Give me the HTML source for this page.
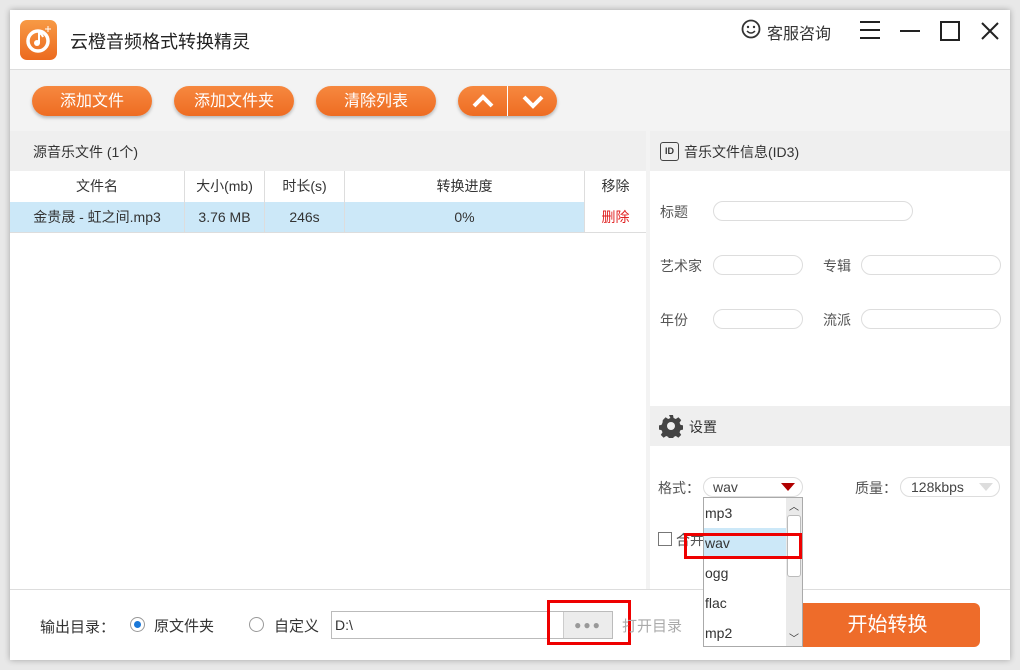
<!DOCTYPE html>
<html><head><meta charset="utf-8"><style>
*{margin:0;padding:0;box-sizing:border-box}
body{width:1020px;height:670px;background:#e8e8e8;font-family:"Liberation Sans","Noto Sans CJK SC",sans-serif;position:relative;overflow:hidden;color:#333}
.a{position:absolute}
.win{left:10px;top:10px;width:1000px;height:650px;background:#f3f3f3;box-shadow:0 0 6px rgba(0,0,0,.3)}
.btn{height:30px;top:86px;border-radius:15px;background:linear-gradient(#f6883f,#ee6c22);color:#fff;font-size:16px;text-align:center;line-height:32px;box-shadow:0 2px 3px rgba(0,0,0,.25)}
.th{top:171px;height:31px;line-height:31px;font-size:14px;text-align:center;border-right:1px solid #ddd}
.td{top:202px;height:30px;line-height:30px;font-size:14px;text-align:center;border-right:1px solid #ddd}
.lbl{font-size:14px;color:#555}
.inp{height:20px;border:1px solid #ddd;border-radius:10px;background:#fff}
</style></head><body>
<div class="a win"></div>
<div class="a" style="left:10px;top:10px;width:1000px;height:60px;background:#fff;border-bottom:1px solid #ddd"></div>
<div class="a" style="left:20px;top:20px;width:37px;height:40px;border-radius:7px;background:linear-gradient(#f79a45,#ec6a1f)"></div>
<svg class="a" style="left:20px;top:20px" width="37" height="40"><circle cx="18" cy="21" r="10" stroke="#fff" stroke-width="3.5" fill="none"/><circle cx="17" cy="23" r="3" fill="#fff"/><path d="M19 23 V13 Q22 14 23 17" stroke="#fff" stroke-width="2" fill="none"/><path d="M28 6v6M25 9h6" stroke="#fff" stroke-width="1"/></svg>
<div class="a" style="left:70px;top:28px;font-size:18px;color:#222">云橙音频格式转换精灵</div>
<svg class="a" style="left:740px;top:19px" width="22" height="22"><circle cx="11" cy="10" r="8.5" stroke="#333" stroke-width="1.8" fill="none"/><circle cx="8" cy="8" r="1.2" fill="#333"/><circle cx="14" cy="8" r="1.2" fill="#333"/><path d="M7 12 Q11 16 15 12" stroke="#333" stroke-width="1.5" fill="none"/></svg>
<div class="a" style="left:767px;top:20px;font-size:16px;color:#333">客服咨询</div>
<div class="a" style="left:860px;top:21px;width:20px;height:18px;border-top:2px solid #222;border-bottom:2px solid #222"></div>
<div class="a" style="left:860px;top:29px;width:20px;height:2px;background:#222"></div>
<div class="a" style="left:900px;top:30px;width:20px;height:2px;background:#222"></div>
<div class="a" style="left:940px;top:21px;width:20px;height:20px;border:2px solid #222"></div>
<svg class="a" style="left:980px;top:21px" width="20" height="20"><path d="M2 2L18 18M18 2L2 18" stroke="#222" stroke-width="2"/></svg>

<div class="a btn" style="left:32px;width:120px">添加文件</div>
<div class="a btn" style="left:174px;width:120px">添加文件夹</div>
<div class="a btn" style="left:316px;width:120px">清除列表</div>
<div class="a btn" style="left:458px;width:99px"></div>
<div class="a" style="left:507px;top:86px;width:1px;height:30px;background:#fff"></div>
<svg class="a" style="left:470px;top:92px" width="80" height="18"><path d="M4 14 L13 5 L22 14" stroke="#fff" stroke-width="4" fill="none"/><path d="M54 5 L63 14 L72 5" stroke="#fff" stroke-width="4" fill="none"/></svg>

<div class="a" style="left:10px;top:131px;width:636px;height:458px;background:#fff"></div>
<div class="a" style="left:10px;top:131px;width:636px;height:40px;background:#efefef"></div>
<div class="a" style="left:33px;top:142px;font-size:14px">源音乐文件 (1个)</div>
<div class="a th" style="left:10px;width:175px">文件名</div>
<div class="a th" style="left:185px;width:80px">大小(mb)</div>
<div class="a th" style="left:265px;width:80px">时长(s)</div>
<div class="a th" style="left:345px;width:240px">转换进度</div>
<div class="a th" style="left:585px;width:61px;border:none">移除</div>
<div class="a" style="left:10px;top:202px;width:636px;height:31px;background:#cce8f8;border-bottom:1px solid #ddd"></div>
<div class="a td" style="left:10px;width:175px">金贵晟 - 虹之间.mp3</div>
<div class="a td" style="left:185px;width:80px">3.76 MB</div>
<div class="a td" style="left:265px;width:80px">246s</div>
<div class="a td" style="left:345px;width:240px">0%</div>
<div class="a td" style="left:585px;width:61px;border:none;background:#fff;color:#e02020">删除</div>

<div class="a" style="left:650px;top:131px;width:360px;height:458px;background:#fff"></div>
<div class="a" style="left:650px;top:131px;width:360px;height:40px;background:#efefef"></div>
<div class="a" style="left:660px;top:142px;width:19px;height:19px;border:1.5px solid #444;border-radius:3px;font-size:9px;font-weight:bold;text-align:center;line-height:16px">ID</div>
<div class="a" style="left:684px;top:142px;font-size:14px">音乐文件信息(ID3)</div>
<div class="a lbl" style="left:660px;top:202px">标题</div>
<div class="a inp" style="left:713px;top:201px;width:200px"></div>
<div class="a lbl" style="left:660px;top:256px">艺术家</div>
<div class="a inp" style="left:713px;top:255px;width:90px"></div>
<div class="a lbl" style="left:823px;top:256px">专辑</div>
<div class="a inp" style="left:861px;top:255px;width:140px"></div>
<div class="a lbl" style="left:660px;top:310px">年份</div>
<div class="a inp" style="left:713px;top:309px;width:90px"></div>
<div class="a lbl" style="left:823px;top:310px">流派</div>
<div class="a inp" style="left:861px;top:309px;width:140px"></div>

<div class="a" style="left:650px;top:406px;width:360px;height:40px;background:#efefef"></div>
<svg class="a" style="left:659px;top:414px" width="24" height="24" viewBox="0 0 24 24"><path fill="#444" d="M10 1h4l.6 3 2.2 1 2.6-1.7 2.8 2.8-1.7 2.6 1 2.2 3 .6v4l-3 .6-1 2.2 1.7 2.6-2.8 2.8-2.6-1.7-2.2 1-.6 3h-4l-.6-3-2.2-1-2.6 1.7-2.8-2.8 1.7-2.6-1-2.2-3-.6v-4l3-.6 1-2.2L3.8 6.1l2.8-2.8 2.6 1.7 2.2-1z"/><circle cx="12" cy="12" r="4" fill="#efefef"/></svg>
<div class="a" style="left:689px;top:417px;font-size:14px">设置</div>
<div class="a lbl" style="left:658px;top:478px">格式：</div>
<div class="a inp" style="left:703px;top:477px;width:100px;font-size:14px;line-height:18px;padding-left:9px;color:#444">wav</div>
<div class="a" style="left:781px;top:483px;width:0;height:0;border-left:7px solid transparent;border-right:7px solid transparent;border-top:8px solid #b00000"></div>
<div class="a lbl" style="left:855px;top:478px">质量：</div>
<div class="a inp" style="left:900px;top:477px;width:100px;font-size:14px;line-height:18px;padding-left:10px;color:#444">128kbps</div>
<div class="a" style="left:979px;top:483px;width:0;height:0;border-left:7px solid transparent;border-right:7px solid transparent;border-top:8px solid #ddd"></div>
<div class="a" style="left:658px;top:532px;width:14px;height:14px;border:1px solid #777"></div>
<div class="a lbl" style="left:676px;top:530px">合并</div>

<div class="a" style="left:10px;top:589px;width:1000px;height:71px;background:#fff;border-top:1px solid #ddd"></div>
<div class="a" style="left:40px;top:616px;font-size:15px">输出目录：</div>
<div class="a" style="left:130px;top:617px;width:15px;height:15px;border:1px solid #999;border-radius:50%"></div>
<div class="a" style="left:134px;top:621px;width:7px;height:7px;background:#1a78d8;border-radius:50%"></div>
<div class="a" style="left:154px;top:615px;font-size:15px">原文件夹</div>
<div class="a" style="left:249px;top:617px;width:15px;height:15px;border:1px solid #999;border-radius:50%"></div>
<div class="a" style="left:274px;top:615px;font-size:15px">自定义</div>
<div class="a" style="left:331px;top:611px;width:282px;height:28px;border:1px solid #bbb;background:#fff;font-size:14px;line-height:26px;padding-left:3px">D:\</div>
<div class="a" style="left:563px;top:612px;width:49px;height:26px;background:#ececec;border-left:1px solid #ccc;color:#999;font-size:12px;text-align:center;line-height:26px;letter-spacing:2px">●●●</div>
<div class="a" style="left:547px;top:600px;width:84px;height:45px;border:3px solid #e00"></div>
<div class="a" style="left:622px;top:615px;font-size:15px;color:#aaa">打开目录</div>
<div class="a" style="left:795px;top:603px;width:185px;height:44px;background:#ee6c2a;border-radius:6px;color:#fff;font-size:20px;text-align:center;line-height:44px">开始转换</div>

<div class="a" style="left:703px;top:497px;width:100px;height:150px;background:#fff;border:1px solid #aaa"></div>
<div class="a" style="left:704px;top:528px;width:82px;height:30px;background:#cce8f8"></div>
<div class="a" style="left:786px;top:498px;width:16px;height:148px;background:#eaeaea"></div>
<div class="a" style="left:787px;top:515px;width:14px;height:62px;background:#fff;border:1px solid #bbb;border-radius:3px"></div>
<div class="a" style="left:789px;top:498px;font-size:10px;color:#333">︿</div>
<div class="a" style="left:789px;top:630px;font-size:10px;color:#333">﹀</div>
<div class="a" style="left:705px;top:505px;font-size:14px">mp3</div>
<div class="a" style="left:705px;top:535px;font-size:14px">wav</div>
<div class="a" style="left:705px;top:565px;font-size:14px">ogg</div>
<div class="a" style="left:705px;top:595px;font-size:14px">flac</div>
<div class="a" style="left:705px;top:625px;font-size:14px">mp2</div>
<div class="a" style="left:684px;top:533px;width:118px;height:26px;border:3px solid #e00"></div>
</body></html>
